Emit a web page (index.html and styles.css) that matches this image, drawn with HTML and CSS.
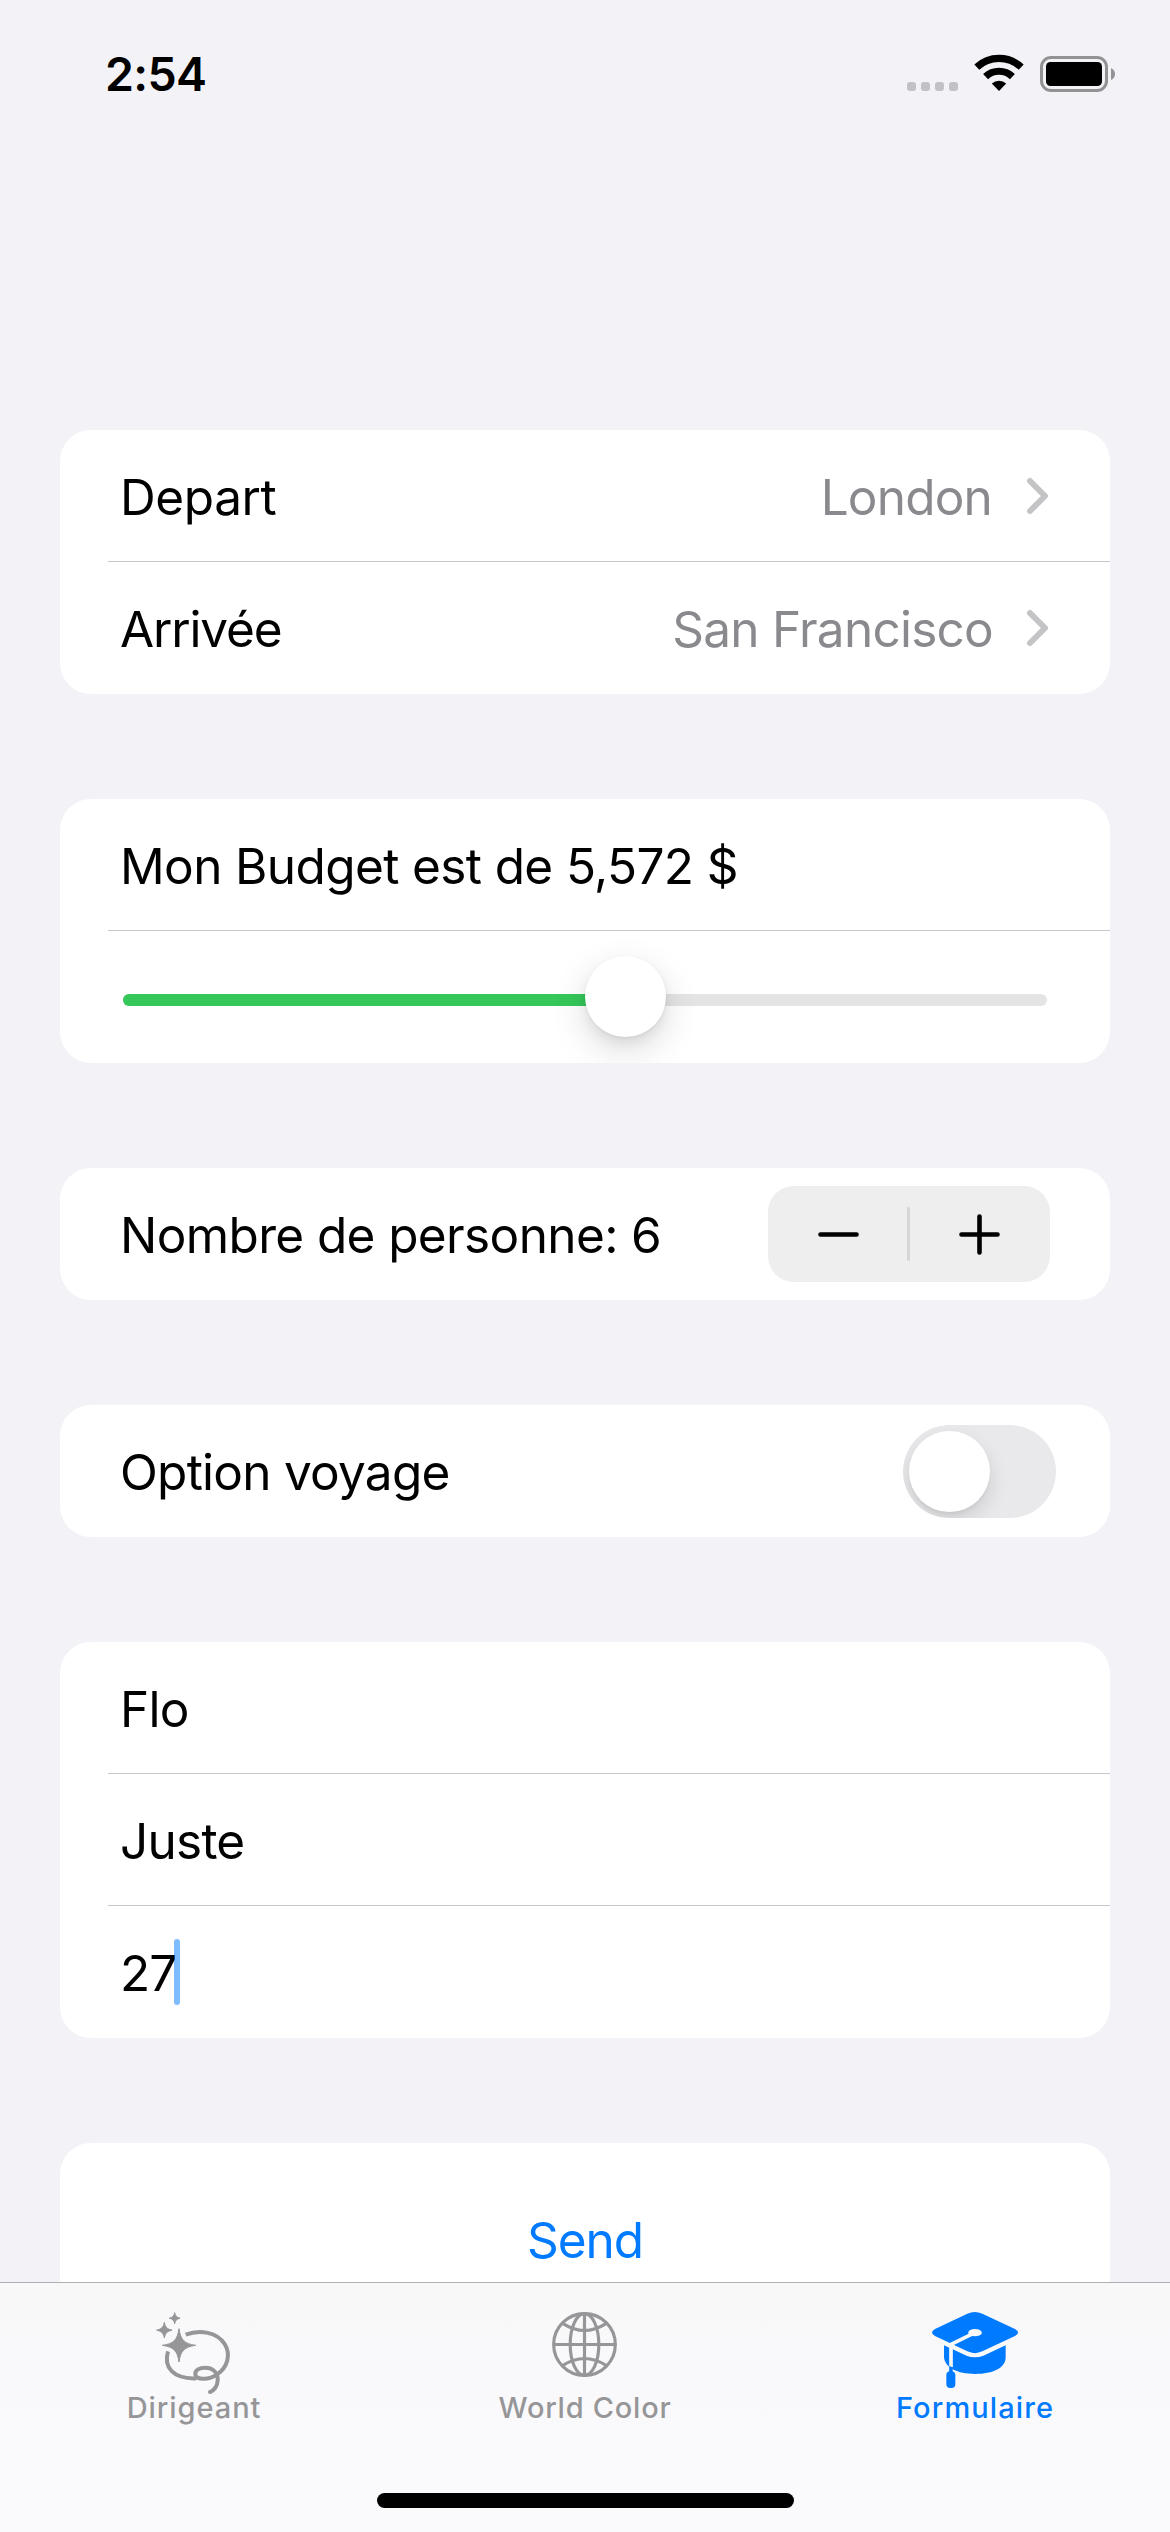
FILE: index.html
```
<!DOCTYPE html>
<html lang="fr">
<head>
<meta charset="utf-8">
<title>Formulaire</title>
<link rel="stylesheet" href="styles.css">
</head>
<body>
<header class="status-bar">
  <span class="time">2:54</span>
  <div class="status-icons">
    <svg width="51" height="37" viewBox="0 0 51 37" fill="#c2c2c6">
      <rect x="0" y="27" width="9" height="9" rx="3"/><rect x="14" y="27" width="9" height="9" rx="3"/>
      <rect x="28" y="27" width="9" height="9" rx="3"/><rect x="42" y="27" width="9" height="9" rx="3"/>
    </svg>
    <svg width="48" height="37" viewBox="0 0 48 37" fill="none" stroke="#000">
      <path d="M1.8 12.2A32.4 32.4 0 0 1 46.2 12.2" stroke-width="7.2"/>
      <path d="M10.6 21.6A19.5 19.5 0 0 1 37.4 21.6" stroke-width="7.2"/>
      <path d="M24 36L16.8 28.6A10.5 10.5 0 0 1 31.2 28.6Z" fill="#000" stroke="none"/>
    </svg>
    <svg width="75" height="37" viewBox="0 0 75 37">
      <rect x="1.5" y="2.5" width="65" height="33" rx="9.5" fill="none" stroke="#929295" stroke-width="3"/>
      <rect x="6" y="7" width="56" height="24" rx="4.5"/>
      <path d="M71 13Q75 15 75 19T71 25Z" fill="#929295"/>
    </svg>
  </div>
</header>

<main class="form">
  <section class="card">
    <div class="row">
      <span class="label depart">Depart</span>
      <span class="value london">London</span>
      <svg class="chevron" width="24" height="38" viewBox="0 0 24 38"><path d="M4 4L19 19L4 34"/></svg>
    </div>
    <div class="row">
      <span class="label arrivee">Arrivée</span>
      <span class="value">San Francisco</span>
      <svg class="chevron" width="24" height="38" viewBox="0 0 24 38"><path d="M4 4L19 19L4 34"/></svg>
    </div>
  </section>

  <section class="card">
    <div class="row"><span class="label wide">Mon Budget est de 5,572 $</span></div>
    <div class="row slider-row">
      <div class="slider">
        <div class="slider-fill" style="width:54.4%"></div>
        <div class="slider-knob" style="left:54.4%"></div>
      </div>
    </div>
  </section>

  <section class="card">
    <div class="row">
      <span class="label wide">Nombre de personne: 6</span>
      <div class="stepper">
        <svg width="139" height="96" viewBox="0 0 139 96"><path d="M52.5 48.5H88.5"/></svg>
        <span class="stepper-divider"></span>
        <svg width="140" height="96" viewBox="0 0 140 96"><path d="M51.5 48.5H87.5M69.5 30.5V66.5"/></svg>
      </div>
    </div>
  </section>

  <section class="card">
    <div class="row toggle-row">
      <span class="label">Option voyage</span>
      <div class="toggle"><div class="toggle-knob"></div></div>
    </div>
  </section>

  <section class="card">
    <div class="row"><span class="label">Flo</span></div>
    <div class="row"><span class="label">Juste</span></div>
    <div class="row"><span class="label age">27</span><span class="caret"></span></div>
  </section>

  <section class="card send-card"><span class="send">Send</span></section>
</main>

<nav class="tab-bar">
  <div class="tab">
    <svg class="tab-icon" viewBox="150 105 270 270">
      <g fill="none" stroke="currentColor" stroke-width="12">
        <path d="M257 194C300 177 352 187 374 222C394 254 382 293 351 313C328 330 289 331 286 314C284 300 299 293 316 293C340 293 355 311 353 331C352 349 343 360 330 366" stroke-linejoin="round"/>
        <path d="M204 244C190 292 219 328 290 325"/>
        <path d="M330 366V366.1" stroke-linecap="round"/>
      </g>
      <g fill="currentColor" stroke="currentColor" stroke-width="3" stroke-linejoin="round">
        <path d="M237 176C242 210 253 221 287 226C253 231 242 242 237 276C232 242 221 231 187 226C221 221 232 210 237 176Z"/>
        <path d="M193 157C196 172 201 177 216 180.500C201 184 196 189 193 204C190 189 185 184 170 180.500C185 177 190 172 193 157Z"/>
        <path d="M224 128C226 138 230 142 240 144.500C230 147 226 151 224 161C222 151 218 147 208 144.500C218 142 222 138 224 128Z"/>
      </g>
    </svg>
    <span class="tab-label dirigeant">Dirigeant</span>
  </div>
  <div class="tab">
    <svg class="tab-icon" viewBox="210 555 270 270" fill="none" stroke="currentColor" stroke-width="9.500">
      <circle cx="343.500" cy="673.500" r="92.500"/>
      <ellipse cx="343.500" cy="673.500" rx="43" ry="92.500"/>
      <path d="M343.500 581V766M251 673.500H436M279 611Q343.500 652 408 611M279 736Q343.500 695 408 736"/>
    </svg>
    <span class="tab-label world">World Color</span>
  </div>
  <div class="tab active">
    <svg class="tab-icon" viewBox="210 105 270 270" fill="currentColor">
      <path d="M252 226V262C255 293 292 312 345 312C400 312 437 294 437 262V226L370 257Q344 267 320 257Z"/>
      <path class="cutout" d="M225 198L322 244Q344 255 367 244L465 198" fill="none" stroke-width="22"/>
      <path d="M322 131Q344 121 367 131L465 177Q483 187 465 198L367 244Q344 255 322 244L225 198Q207 187 225 177Z"/>
      <path class="cutout" d="M345 188L273 223V292" fill="none" stroke-width="11" stroke-linejoin="round"/>
      <ellipse class="cutout-fill" cx="345" cy="188" rx="20.500" ry="11"/>
      <path d="M267.500 288L278 292V308H267.500Z"/>
      <rect x="259" y="304" width="27" height="50" rx="12"/>
    </svg>
    <span class="tab-label formulaire">Formulaire</span>
  </div>
  <div class="home-indicator"></div>
</nav>
</body>
</html>
```
FILE: styles.css
```
* { box-sizing: border-box; }

body {
  margin: 0;
  width: 1170px;
  height: 2532px;
  display: flex;
  flex-direction: column;
  overflow: hidden;
  background: #f2f2f7;
  color: #000;
  font-family: Inter, "Liberation Sans", sans-serif;
}

svg { display: block; flex: none; overflow: visible; }

/* Status bar */
.status-bar {
  flex: none;
  height: 148px;
  padding: 0 55px 0 105px;
  display: flex;
  justify-content: space-between;
}
.time {
  font-size: 46.5px;
  font-weight: 600;
  line-height: 148px;
  letter-spacing: -0.7px;
}
.status-icons { display: flex; gap: 17px; padding-top: 55px; }

/* Form */
.form {
  flex: 1;
  min-height: 0;
  overflow: hidden;
  padding: 282px 60px 0;
  display: flex;
  flex-direction: column;
  gap: 105px;
}
.card {
  flex: none;
  background: #fff;
  border-radius: 31px;
  overflow: hidden;
  padding-left: 48px;
}
.row {
  height: 132px;
  padding: 0 60px 0 12px;
  display: flex;
  border-bottom: 1px solid #c6c6c8;
}
.row:last-child { border-bottom: 0; }
.label, .value {
  font-size: 49.5px;
  line-height: 134px;
  letter-spacing: -0.75px;
  white-space: nowrap;
}
.label { margin-right: auto; }
.label.depart { letter-spacing: -0.4px; }
.label.wide { letter-spacing: -0.62px; }
.label.arrivee { letter-spacing: -1.15px; }
.value { color: #8a8a8e; margin-right: 33px; }
.value.london { margin-right: 34px; letter-spacing: -0.8px; }
.chevron { margin-top: 47px; }
.chevron path {
  fill: none;
  stroke: #c4c4c6;
  stroke-width: 6;
  stroke-linecap: round;
  stroke-linejoin: round;
}

/* Slider */
.slider-row { padding-left: 15px; padding-right: 63px; }
.slider {
  position: relative;
  width: 100%;
  height: 12px;
  margin-top: 63px;
  border-radius: 6px;
  background: #e4e4e5;
}
.slider-fill { height: 12px; border-radius: 6px 0 0 6px; background: #35c759; }
.slider-knob {
  position: absolute;
  top: -38px;
  width: 81px;
  height: 81px;
  margin-left: -40.5px;
  border-radius: 50%;
  background: #fff;
  box-shadow: 0 1px 3px rgba(0, 0, 0, 0.06), 0 13px 36px rgba(0, 0, 0, 0.14), 0 6px 12px rgba(0, 0, 0, 0.06);
}

/* Stepper */
.stepper {
  width: 282px;
  height: 96px;
  margin-top: 18px;
  display: flex;
  align-items: center;
  border-radius: 26px;
  background: #eee;
}
.stepper path { fill: none; stroke: #000; stroke-width: 4.6px; stroke-linecap: round; }
.stepper-divider { width: 3px; height: 54px; border-radius: 1px; background: #d6d6d6; }

/* Toggle */
.toggle-row { padding-right: 54px; }
.toggle {
  width: 153px;
  height: 93px;
  margin-top: 20px;
  padding: 6px;
  border-radius: 47px;
  overflow: hidden;
  background: #e9e9eb;
}
.toggle-knob {
  width: 81px;
  height: 81px;
  border-radius: 50%;
  background: #fff;
  box-shadow: 0 9px 20px rgba(0, 0, 0, 0.12), 0 3px 3px rgba(0, 0, 0, 0.04);
}

/* Text fields */
.label.age { margin-right: -2.5px; letter-spacing: -1px; }
.caret { width: 6px; height: 66px; margin-top: 33px; border-radius: 3px; background: rgba(0, 122, 255, 0.5); }

/* Send button */
.send-card { height: 240px; padding: 0; text-align: center; }
.send { color: #007aff; font-size: 49.5px; line-height: 194px; letter-spacing: -1px; }

/* Tab bar */
.tab-bar {
  flex: none;
  height: 250px;
  border-top: 1px solid #b0b0b2;
  background: linear-gradient(#f8f8f9, #fafafd 70%);
  display: grid;
  grid-template-columns: repeat(3, 390px);
  grid-template-rows: 210px 15px;
  justify-items: center;
}
.tab {
  color: #969698;
  padding-top: 22px;
  display: flex;
  flex-direction: column;
  align-items: center;
}
.tab.active { color: #007aff; }
.tab-icon { width: 90px; height: 90px; margin-bottom: -6px; }
.tab-label {
  font-size: 29px;
  font-weight: 500;
  line-height: 37px;
  letter-spacing: 0.95px;
  white-space: nowrap;
}
.tab-label.dirigeant { margin-right: 2px; }
.tab-label.world { letter-spacing: 0.75px; }
.tab-label.formulaire { letter-spacing: 1.1px; }
.cutout { stroke: #f9f9fa; }
.cutout-fill { fill: #f9f9fa; }
.home-indicator {
  grid-column: 1 / -1;
  width: 417px;
  height: 15px;
  border-radius: 8px;
  background: #000;
}
```
